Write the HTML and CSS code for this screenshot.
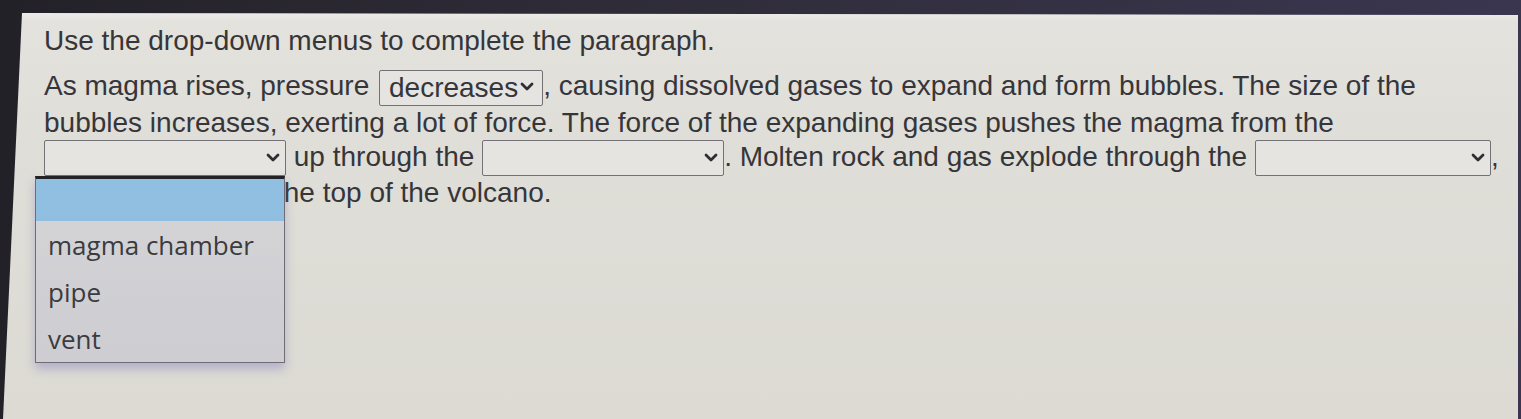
FILE: index.html
```html
<!DOCTYPE html>
<html lang="en">
<head>
<meta charset="utf-8">
<title>Volcano paragraph</title>
<link rel="stylesheet" href="styles.css">
</head>
<body>
<div class="screen">
  <div class="content">
    <h1 class="prompt">Use the drop-down menus to complete the paragraph.</h1>
    <p class="para"><span>As magma rises, pressure </span><span class="sel sel-filled"><span class="sel-value">decreases</span><svg class="chev" viewBox="0 0 14 9" width="14" height="9"><path d="M2 2 L7 7 L12 2" /></svg></span><span>, causing dissolved gases to expand and form bubbles. The size of the</span> <span>bubbles increases, exerting a lot of force. The force of the expanding gases pushes the magma from the</span> <span class="dd"><span class="sel sel-empty sel-open"><svg class="chev" viewBox="0 0 14 9" width="14" height="9"><path d="M2 2 L7 7 L12 2" /></svg></span><span class="dd-list"><span class="dd-opt dd-blank"></span><span class="dd-opt">magma chamber</span><span class="dd-opt">pipe</span><span class="dd-opt">vent</span></span></span><span> up through the </span><span class="sel sel-empty"><svg class="chev" viewBox="0 0 14 9" width="14" height="9"><path d="M2 2 L7 7 L12 2" /></svg></span><span>. Molten rock and gas explode through the </span><span class="sel sel-empty sel-narrow"><svg class="chev" viewBox="0 0 14 9" width="14" height="9"><path d="M2 2 L7 7 L12 2" /></svg></span><span>,</span> <span class="covered">a large opening at t</span><span>he top of the volcano.</span></p>
  </div>
</div>
</body>
</html>
```

FILE: styles.css
```css
html, body {
  margin: 0;
  padding: 0;
}

body {
  width: 1521px;
  height: 419px;
  overflow: hidden;
  background: linear-gradient(90deg, #232128 0%, #2f2c38 40%, #3a3650 100%);
}

.screen {
  box-sizing: border-box;
  margin-top: 13px;
  width: 1518px;
  height: 406px;
  padding: 11px 0 0 44px;
  background: linear-gradient(180deg, #ecebe7 0px, #e3e2dd 9px, #dfded8 120px, #dcdad3 100%);
  clip-path: polygon(22px 0, 1518px 2px, 1518px 100%, 3px 100%);
}

.content {
  width: 1464px;
  font-family: "Liberation Sans", Arial, sans-serif;
  font-size: 28px;
  line-height: 34px;
  color: #36363a;
}

.prompt {
  margin: 0 0 11px;
  font: inherit;
}

.para {
  margin: 0;
}

.covered {
  visibility: hidden;
}

.sel {
  box-sizing: border-box;
  display: inline-flex;
  align-items: center;
  height: 36px;
  vertical-align: middle;
  border: 1.5px solid #727175;
  border-radius: 2px;
  background: #e5e4e0;
  line-height: 32px;
}

.sel-filled {
  margin-left: 2px;
  padding: 0 8px 0 9px;
}

.sel-value {
  margin-right: 2px;
}

.sel-empty {
  width: 242px;
  justify-content: flex-end;
  padding-right: 5px;
}

.sel-narrow {
  width: 236px;
}

.chev {
  display: block;
  margin-top: -2px;
}

.chev path {
  fill: none;
  stroke: #2f2f33;
  stroke-width: 2.8;
  stroke-linecap: round;
  stroke-linejoin: round;
}

.dd {
  position: relative;
  display: inline-block;
  vertical-align: middle;
}

.dd .sel {
  vertical-align: top;
}

.dd-list {
  position: absolute;
  top: 100%;
  left: -9px;
  width: 250px;
  box-sizing: border-box;
  display: flex;
  flex-direction: column;
  border: 1.5px solid #6e6d74;
  border-top: 3px solid #232226;
  background: linear-gradient(180deg, #d6d6d8 0%, #d0d0d4 60%, #cdcdd2 100%);
  box-shadow: 0 6px 9px rgba(110, 96, 180, 0.35);
  font-family: "Open Sans", "Noto Sans", sans-serif;
  font-size: 26px;
  color: #3b3b40;
  z-index: 2;
}

.dd-opt {
  display: flex;
  align-items: center;
  height: 47px;
  padding-left: 12px;
  white-space: nowrap;
}

.dd-blank {
  height: 42px;
  background: linear-gradient(180deg, #8fbfe2 0%, #90bee0 100%);
}
```
